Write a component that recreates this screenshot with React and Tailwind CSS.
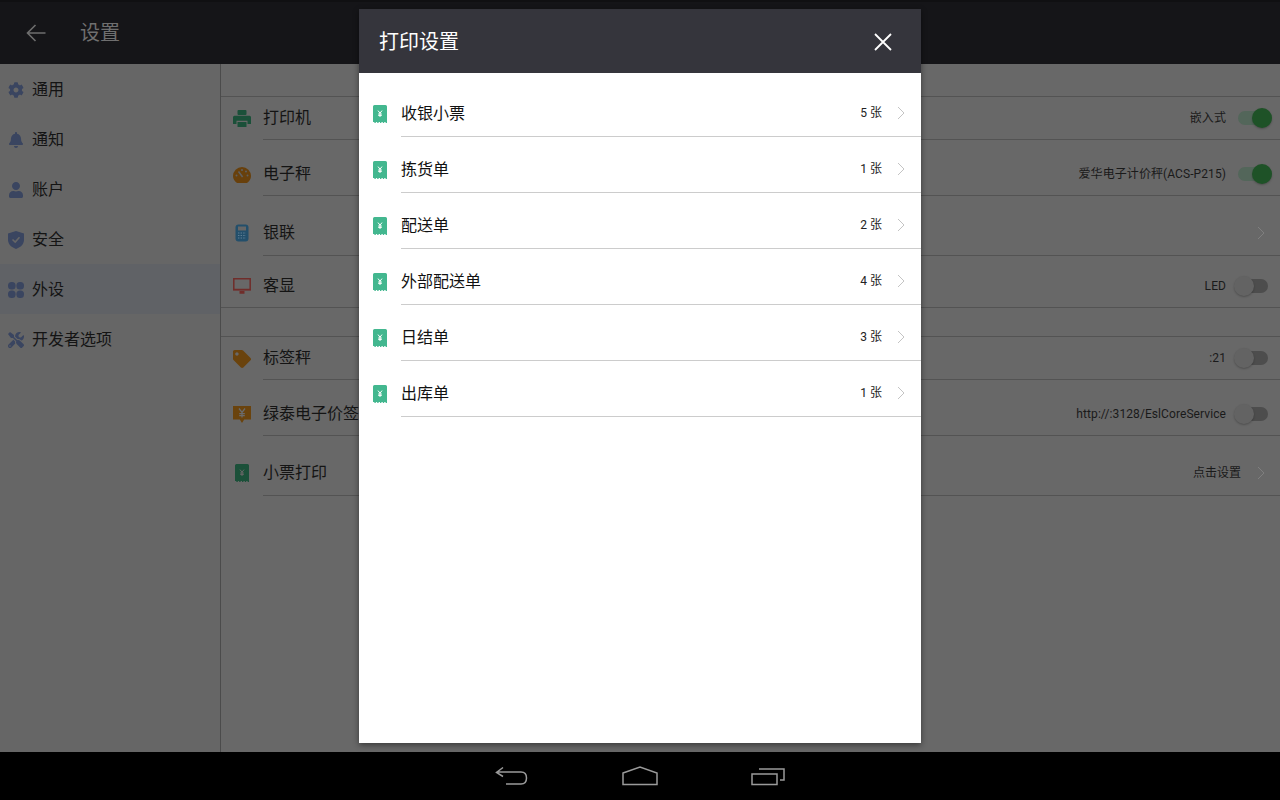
import { FaCog, FaBell, FaUser, FaTag, FaTools } from 'react-icons/fa';

const FONT = 'font-["Roboto","Noto_Sans_CJK_SC",sans-serif]';
const NAV_ICON = '#3a4560';

function ShieldIcon() {
  return (
    <svg width="16" height="18" viewBox="0 0 16 18">
      <path d="M8 0 L16 2.5 V9 C16 13.5 12 16.5 8 18 C4 16.5 0 13.5 0 9 V2.5 Z" fill={NAV_ICON} />
      <path d="M4.5 8.5 L7.2 11 L11.5 6.2" fill="none" stroke="#666666" strokeWidth="1.6" />
    </svg>
  );
}

function DotsIcon() {
  return (
    <svg width="16" height="16" viewBox="0 0 16 16" fill={NAV_ICON}>
      <rect x="0" y="0" width="7.6" height="7.6" rx="3.5" />
      <rect x="8.4" y="0" width="7.6" height="7.6" rx="3.5" />
      <rect x="0" y="8.4" width="7.6" height="7.6" rx="3.5" />
      <rect x="8.4" y="8.4" width="7.6" height="7.6" rx="3.5" />
    </svg>
  );
}

// receipt with a yen sign and a torn bottom edge
function ReceiptIcon({ color, mark }) {
  return (
    <svg width="14" height="18" viewBox="0 0 14 18">
      <path
        d="M1.5 0 H12.5 Q14 0 14 1.5 V18 H12.6 V17 H11.2 V18 H9.8 V17 H8.4 V18 H7 V17 H5.6 V18 H4.2 V17 H2.8 V18 H1.4 V17 H0 V1.5 Q0 0 1.5 0 Z"
        fill={color}
      />
      <path d="M5 5.6 L7 8.2 L9 5.6 M7 8.2 V12 M5.2 9 H8.8 M5.2 10.4 H8.8" fill="none" stroke={mark} strokeWidth="1" />
    </svg>
  );
}

function PrinterIcon() {
  return (
    <svg width="18" height="17" viewBox="0 0 18 17" fill="#1b5039">
      <rect x="4.5" y="0" width="9" height="5" rx="1" />
      <path d="M1.5 5.8 H16.5 Q18 5.8 18 7.3 V14 H14.5 V10.8 H3.5 V14 H0 V7.3 Q0 5.8 1.5 5.8 Z" />
      <rect x="4.5" y="12" width="9" height="5" rx="0.6" />
    </svg>
  );
}

function GaugeIcon() {
  return (
    <svg width="18" height="16" viewBox="0 0 18 16">
      <path d="M4 16 Q0 13 0 9 A9 9 0 0 1 18 9 Q18 13 14 16 Z" fill="#68400c" />
      <path d="M5.5 4.5 L9.6 10" stroke="#5f5f5f" strokeWidth="1.6" />
      <circle cx="3.5" cy="8.5" r="1" fill="#5f5f5f" />
      <circle cx="9" cy="3" r="1" fill="#5f5f5f" />
      <circle cx="14.5" cy="8.5" r="1" fill="#5f5f5f" />
      <circle cx="13" cy="4.6" r="1" fill="#5f5f5f" />
    </svg>
  );
}

function CalcIcon() {
  return (
    <svg width="14" height="18" viewBox="0 0 14 18">
      <rect x="0.5" y="0.5" width="13" height="17" rx="3" fill="#234f6b" />
      <rect x="3" y="2.5" width="8" height="4" fill="#666666" />
      <path d="M3 9 H11 M3 11.5 H11 M3 14 H11" stroke="#5f7f95" strokeWidth="1.2" strokeDasharray="1.4 1.2" />
    </svg>
  );
}

function MonitorIcon() {
  return (
    <svg width="18" height="16" viewBox="0 0 18 16" fill="none">
      <path d="M0.8 0.8 H17.2 V11.5 H0.8 Z" stroke="#702d2a" strokeWidth="1.5" />
      <path d="M0 11 H18 V12.6 H0 Z M6.5 13 H11.5 V15.8 H6.5 Z" fill="#702d2a" />
    </svg>
  );
}

function PriceTagIcon() {
  return (
    <svg width="18" height="18" viewBox="0 0 18 18">
      <path d="M0 0 H18 V13.5 H11.2 L9 17 L6.8 13.5 H0 Z" fill="#6a430d" />
      <path d="M6 2.5 L9 6.4 L12 2.5 M9 6.4 V11.6 M6.2 7.6 H11.8 M6.2 9.6 H11.8" fill="none" stroke="#6a6a6a" strokeWidth="1.3" />
    </svg>
  );
}

function Chevron({ color = '#7f7f7f' }) {
  return (
    <svg width="8" height="14" viewBox="0 0 8 14" fill="none">
      <path d="M1 1 L7 7 L1 13" stroke={color} strokeWidth="1" />
    </svg>
  );
}

function Toggle({ on }) {
  return (
    <div className={`relative h-[14px] w-[30px] rounded-full ${on ? 'bg-[#53665a]' : 'bg-[#4d4d4d]'}`}>
      <div
        className={`absolute top-[-3px] h-5 w-5 rounded-full shadow-[0_1px_2px_rgba(0,0,0,0.25)] ${on ? 'right-[-4px] bg-[#1e5227]' : 'left-[-4px] bg-[#636363]'}`}
      />
    </div>
  );
}

const navItems = [
  { label: '通用', icon: <FaCog size={16} color={NAV_ICON} /> },
  { label: '通知', icon: <FaBell size={16} color={NAV_ICON} /> },
  { label: '账户', icon: <FaUser size={16} color={NAV_ICON} /> },
  { label: '安全', icon: <ShieldIcon /> },
  { label: '外设', icon: <DotsIcon />, active: true },
  { label: '开发者选项', icon: <FaTools size={16} color={NAV_ICON} /> },
];

function SettingRow({ icon, label, rowClass, offsetClass = '', fullLine, right }) {
  return (
    <div className={`flex items-stretch ${rowClass} ${fullLine ? 'border-b border-[#535353]' : ''}`}>
      <div className={`flex w-[42px] items-center justify-center ${offsetClass}`}>{icon}</div>
      <div className={`flex flex-1 items-center pr-3 ${offsetClass} ${fullLine ? '' : 'border-b border-[#535353]'}`}>
        <span className="text-base text-[#141414]">{label}</span>
        <div className="ml-auto flex items-center">{right}</div>
      </div>
    </div>
  );
}

function RightValue({ text, on }) {
  return (
    <>
      <span className="mr-3 text-xs tracking-[0.08px] text-[#1a1a1a]">{text}</span>
      <Toggle on={on} />
    </>
  );
}

const receipts = [
  { label: '收银小票', count: '5 张' },
  { label: '拣货单', count: '1 张' },
  { label: '配送单', count: '2 张' },
  { label: '外部配送单', count: '4 张' },
  { label: '日结单', count: '3 张' },
  { label: '出库单', count: '1 张' },
];

export default function App() {
  return (
    <div className={`relative flex h-[800px] w-[1280px] flex-col overflow-hidden bg-[#686868] ${FONT}`}>
      {/* Action bar */}
      <header className="flex h-16 items-center border-t-2 border-[#101012] bg-[#151518]">
        <svg className="ml-[26px]" width="20" height="18" viewBox="0 0 20 18" fill="none">
          <path d="M9.5 1 L1.5 9 L9.5 17 M1.5 9 H19.5" stroke="#6e6e6e" strokeWidth="1.6" />
        </svg>
        <span className="ml-[34px] text-xl text-[#6f6f6f]">设置</span>
      </header>

      <main className="flex flex-1">
        {/* Sidebar */}
        <nav className="w-[221px] border-r border-[#4b4b4b] bg-[#666666]">
          {navItems.map((item) => (
            <div key={item.label} className={`flex h-[50px] items-center pl-2 pt-[2px] ${item.active ? 'bg-[#606266]' : ''}`}>
              <div className="flex w-4 justify-center">{item.icon}</div>
              <span className="ml-2 text-base text-[#141414]">{item.label}</span>
            </div>
          ))}
        </nav>

        {/* Settings list */}
        <section className="flex-1 bg-[#686868]">
          <div className="h-[33px] border-b border-[#535353]" />
          <SettingRow icon={<PrinterIcon />} label="打印机" rowClass="h-[43px]" right={<RightValue text="嵌入式" on />} />
          <SettingRow icon={<GaugeIcon />} label="电子秤" rowClass="h-14" offsetClass="pt-[13px]" right={<RightValue text="爱华电子计价秤(ACS-P215)" on />} />
          <SettingRow icon={<CalcIcon />} label="银联" rowClass="h-[60px]" offsetClass="pt-[14px]" right={<div className="mr-[3px] flex"><Chevron /></div>} />
          <SettingRow icon={<MonitorIcon />} label="客显" rowClass="h-[52px]" offsetClass="pt-[9px]" fullLine right={<RightValue text="LED" />} />
          <div className="h-[29px] border-b border-[#535353]" />
          <SettingRow icon={<FaTag size={18} color="#6a430d" />} label="标签秤" rowClass="h-[43px]" right={<RightValue text=":21" />} />
          <SettingRow icon={<PriceTagIcon />} label="绿泰电子价签" rowClass="h-14" offsetClass="pt-[13px]" right={<RightValue text="http://:3128/EslCoreService" />} />
          <SettingRow
            icon={<ReceiptIcon color="#1b5039" mark="#666666" />}
            label="小票打印"
            rowClass="h-[60px]"
            offsetClass="pt-[14px]"
            right={
              <>
                <span className="mr-4 text-xs text-[#1a1a1a]">点击设置</span>
                <div className="mr-[3px] flex"><Chevron /></div>
              </>
            }
          />
        </section>
      </main>

      {/* System nav bar */}
      <footer className="flex h-12 items-center justify-center gap-[93px] bg-black pl-px">
        <svg className="ml-[-1px]" width="34" height="20" viewBox="0 0 34 20" fill="none" stroke="#9a9a9a" strokeWidth="1.5">
          <path d="M8 1.5 L1.5 6.5 L8 10.5 M1.5 6 H26 Q31.5 6 31.5 12 Q31.5 18 26 18 H11" />
        </svg>
        <svg width="36" height="20" viewBox="0 0 36 20" fill="none" stroke="#9a9a9a" strokeWidth="1.5">
          <path d="M1 7 L18 1 L35 7 V18.5 H1 Z" />
        </svg>
        <svg width="34" height="20" viewBox="0 0 34 20" fill="none" stroke="#9a9a9a" strokeWidth="1.5">
          <path d="M1 8 H26 V18.5 H1 Z M8 3 H33 V14 H29" />
        </svg>
      </footer>

      {/* Print settings dialog */}
      <div className="absolute left-[359px] top-[9px] flex h-[734px] w-[562px] flex-col bg-white shadow-[0_2px_6px_rgba(0,0,0,0.45)]">
        <div className="flex h-16 shrink-0 items-center justify-between bg-[#35353c] pl-5 pr-[29px] pt-[2px]">
          <span className="text-xl text-white">打印设置</span>
          <svg width="18" height="18" viewBox="0 0 18 18" fill="none">
            <path d="M1 1 L17 17 M17 1 L1 17" stroke="#ffffff" strokeWidth="1.8" />
          </svg>
        </div>
        <div className="pt-[8px]">
          {receipts.map((r) => (
            <div key={r.label} className="flex h-14 items-stretch">
              <div className="flex w-[42px] items-center justify-center pr-[1px] pt-[10px]">
                <ReceiptIcon color="#43b78f" mark="#ffffff" />
              </div>
              <div className="flex flex-1 items-center border-b border-[#cccccc] pr-[16px] pt-[10px]">
                <span className="text-base text-[#111111]">{r.label}</span>
                <span className="mb-[2px] ml-auto mr-[15px] text-xs text-[#222222]">{r.count}</span>
                <div className="mb-[2px] flex">
                  <Chevron color="#c4c4c4" />
                </div>
              </div>
            </div>
          ))}
        </div>
      </div>
    </div>
  );
}
